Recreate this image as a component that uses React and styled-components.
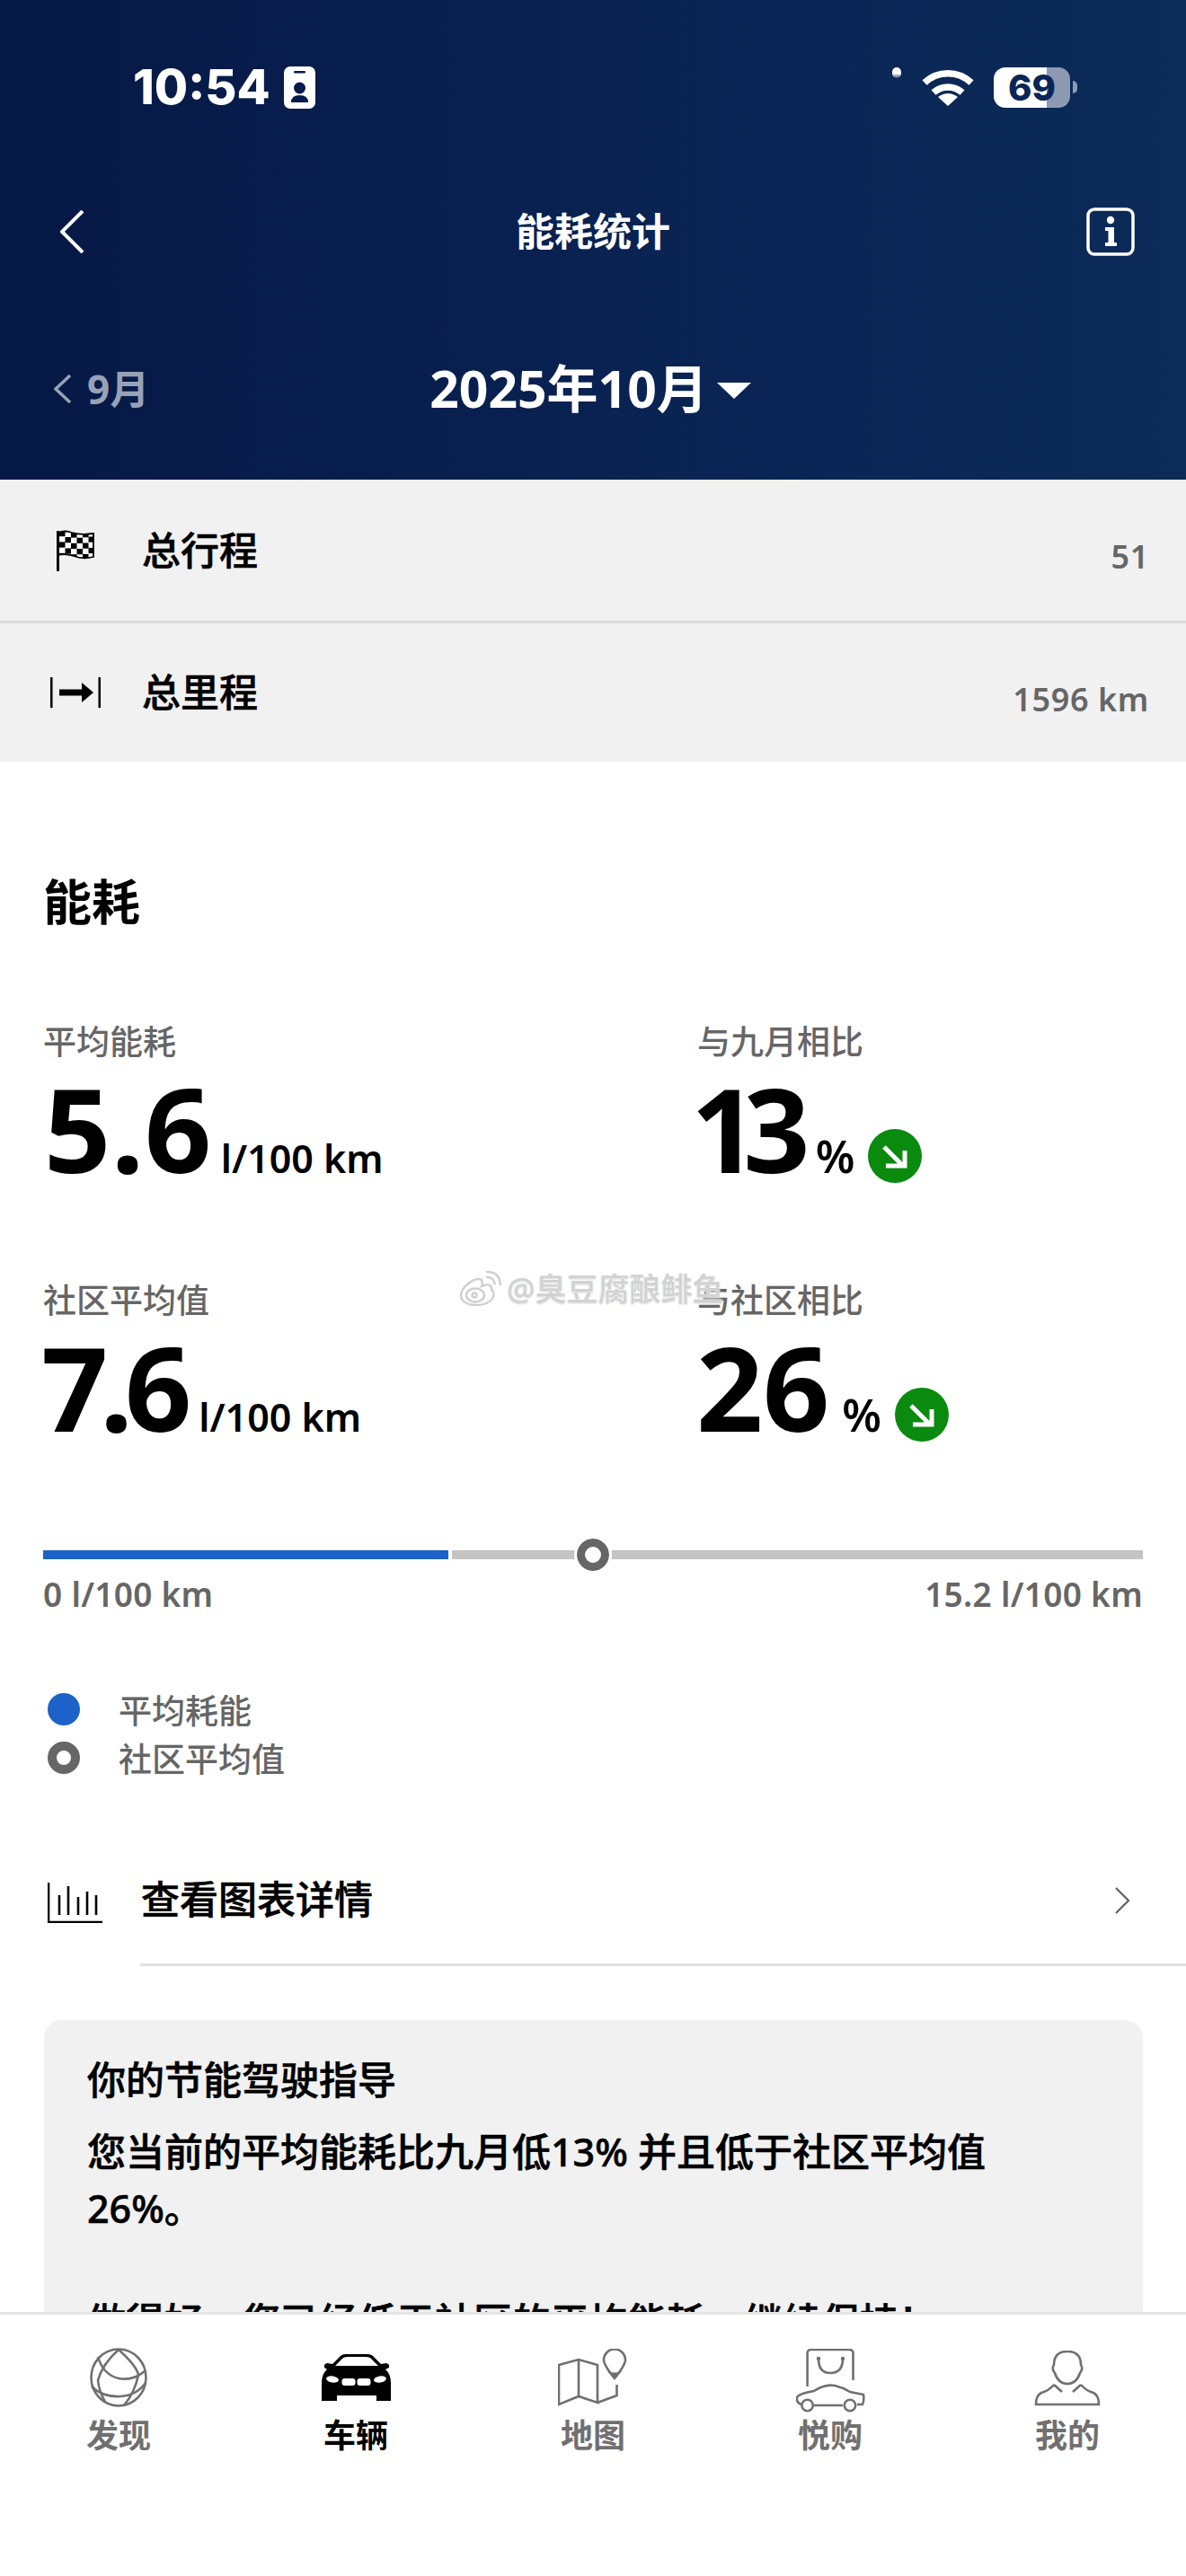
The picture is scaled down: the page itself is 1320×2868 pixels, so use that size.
import React from "react";
import styled, { createGlobalStyle } from "styled-components";

const Global = createGlobalStyle`
  html, body { margin: 0; padding: 0; background: #fff; }
  * { box-sizing: border-box; }
`;

const FONT = `"Noto Sans", "Noto Sans CJK SC", sans-serif`;

const Page = styled.div`
  position: relative;
  width: 1320px;
  height: 2868px;
  overflow: hidden;
  display: flex;
  flex-direction: column;
  background: #fff;
  color: #000;
  font-family: ${FONT};
`;

const Header = styled.header`
  flex: none;
  height: 534px;
  display: flex;
  flex-direction: column;
  background: linear-gradient(90deg, #061845 0%, #0a2656 70%, #0c2b58 100%);
  color: #fff;
`;

const StatusBar = styled.div`
  height: 194px;
  padding: 0 121px 0 148px;
  display: flex;
  align-items: center;
  justify-content: space-between;
`;

const StatusLeft = styled.div`
  display: flex;
  align-items: center;
  gap: 15px;
`;

const Clock = styled.span`
  font-family: Inter, sans-serif;
  font-size: 54px;
  line-height: 60px;
  font-weight: 800;
`;

const StatusRight = styled.div`
  display: flex;
  align-items: center;
`;

const SignalDot = styled.i`
  width: 10px;
  height: 12px;
  border-radius: 5px;
  background: linear-gradient(#fff 55%, rgba(255, 255, 255, 0.2));
  margin: -32px 23px 0 0;
`;

const Battery = styled.div`
  width: 85px;
  height: 45px;
  margin-left: 22px;
  border-radius: 13px;
  background: linear-gradient(90deg, #fff 59px, #8d9ab2 59px);
  color: #0a2656;
  font-family: Inter, sans-serif;
  font-size: 40px;
  font-weight: 800;
  line-height: 45px;
  text-align: center;
`;

const BatteryCap = styled.i`
  width: 5px;
  height: 14px;
  margin-left: 3px;
  border-radius: 0 7px 7px 0;
  background: #8d9ab2;
`;

const TitleBar = styled.div`
  height: 128px;
  padding: 0 57px;
  display: grid;
  grid-template-columns: 1fr auto 1fr;
  align-items: center;
`;

const BackWrap = styled.div`
  display: flex;
  padding-left: 10px;
`;

const Title = styled.h1`
  margin: 0;
  font-size: 43px;
  font-weight: 700;
  line-height: 60px;
`;

const InfoWrap = styled.div`
  justify-self: end;
  display: flex;
`;

const MonthBar = styled.div`
  position: relative;
  height: 212px;
  padding-top: 60px;
  display: flex;
  justify-content: center;
  align-items: flex-start;
`;

const PrevMonth = styled.div`
  position: absolute;
  left: 60px;
  top: 88px;
  display: flex;
  align-items: center;
  gap: 17px;
  color: #98a2b6;
  font-size: 44px;
  font-weight: 700;
  line-height: 46px;
`;

const MonthTitle = styled.div`
  display: flex;
  align-items: center;
  gap: 10px;
  font-size: 57px;
  font-weight: 700;
  line-height: 100px;
  transform: translateX(-3px);
`;

const Caret = styled.i`
  width: 0;
  height: 0;
  margin-top: 6px;
  border-left: 19px solid transparent;
  border-right: 19px solid transparent;
  border-top: 18px solid #fff;
`;

const Body = styled.main`
  flex: 1;
  min-height: 0;
  overflow: hidden;
`;

const SummaryRow = styled.div`
  height: ${(p) => p.$h}px;
  padding: 0 41px 0 ${(p) => p.$pad}px;
  display: flex;
  align-items: center;
  background: #f1f1f2;
  border-bottom: ${(p) => (p.$line ? "3px solid #dcdcdc" : "0")};
`;

const SummaryIcon = styled.div`
  width: ${(p) => p.$w}px;
  display: flex;
`;

const SummaryLabel = styled.span`
  flex: 1;
  font-size: 43px;
  font-weight: 500;
  -webkit-text-stroke: 0.6px #000;
  line-height: 60px;
`;

const SummaryValue = styled.span`
  color: #666;
  font-size: 36px;
  font-weight: 600;
  letter-spacing: 0.6px;
  margin-top: 14px;
`;

const Section = styled.section`
  padding: 0 48px;
`;

const SectionTitle = styled.h2`
  margin: 0;
  padding-top: 116px;
  font-size: 54px;
  font-weight: 700;
  line-height: 80px;
`;

const StatGrid = styled.div`
  margin-top: 91px;
  display: grid;
  grid-template-columns: 728px 1fr;
  grid-auto-rows: 288px;
`;

const Stat = styled.div`
  display: flex;
  flex-direction: column;
`;

const StatLabel = styled.div`
  height: 50px;
  color: #666;
  font-size: 37px;
  font-weight: 500;
  line-height: 50px;
`;

const StatValue = styled.div`
  margin-top: 11px;
  display: flex;
  align-items: baseline;
`;

const BigNumber = styled.span`
  font-size: 130px;
  font-weight: 700;
  line-height: 120px;
  letter-spacing: ${(p) => p.$track}px;
  margin-left: ${(p) => p.$shift}px;
`;

const Unit = styled.span`
  margin-left: ${(p) => p.$gap}px;
  font-size: ${(p) => p.$size}px;
  font-weight: 600;
  line-height: 60px;
`;

const Trend = styled.svg`
  width: 60px;
  height: 60px;
  align-self: flex-end;
  margin: 0 0 0 15px;
`;

const Range = styled.div`
  margin-top: 2px;
`;

const Track = styled.div`
  height: 36px;
  display: flex;
  align-items: center;
  gap: 4px;
  position: relative;
`;

const TrackFill = styled.i`
  height: 10px;
  background: ${(p) => p.$c};
  flex: ${(p) => p.$flex};
`;

const Marker = styled.i`
  position: absolute;
  left: 594px;
  top: 0;
  width: 36px;
  height: 36px;
  border-radius: 50%;
  background: #fff;
  border: 9px solid #666;
  outline: 3px solid #fff;
`;

const RangeLabels = styled.div`
  margin-top: 1px;
  display: flex;
  justify-content: space-between;
  color: #666;
  font-size: 37px;
  font-weight: 600;
  line-height: 50px;
  letter-spacing: 0.3px;
`;

const Legend = styled.div`
  margin-top: 76px;
  display: flex;
  flex-direction: column;
`;

const LegendRow = styled.div`
  height: 54px;
  display: flex;
  align-items: center;
  gap: 43px;
  padding-left: 5px;
  color: #666;
  font-size: 37px;
  font-weight: 500;
`;

const LegendDot = styled.i`
  width: 36px;
  height: 36px;
  border-radius: 50%;
  background: ${(p) => (p.$ring ? "#fff" : "#1c62c8")};
  border: ${(p) => (p.$ring ? "10px solid #666" : "0")};
`;

const DetailRow = styled.div`
  margin-top: 82px;
  height: 120px;
  display: flex;
  align-items: flex-start;
  padding: 24px 62px 0 53px;
`;

const DetailIcon = styled.div`
  width: 104px;
  display: flex;
  padding-top: 6px;
`;

const DetailLabel = styled.span`
  flex: 1;
  font-size: 43px;
  font-weight: 500;
  -webkit-text-stroke: 0.6px #000;
  line-height: 50px;
`;

const DetailChevron = styled.div`
  display: flex;
  padding-top: 11px;
`;

const Divider = styled.div`
  margin-left: 156px;
  height: 3px;
  background: #e0e0e0;
`;

const Card = styled.div`
  margin: 60px 48px 0 49px;
  padding: 35px 48px 60px;
  border-radius: 20px;
  background: #f1f1f2;
  font-size: 43px;
  font-weight: 500;
  -webkit-text-stroke: 0.6px #000;
  line-height: 63px;
`;

const CardTitle = styled.div`
  margin-bottom: 17px;
`;

const CardText = styled.div`
  margin-bottom: 63px;
`;

const TabBar = styled.nav`
  flex: none;
  height: 294px;
  display: grid;
  grid-template-columns: repeat(5, 264px);
  background: #fff;
  border-top: 3px solid #e4e4e4;
`;

const Tab = styled.div`
  display: flex;
  flex-direction: column;
  align-items: center;
  color: ${(p) => (p.$active ? "#000" : "#707070")};
`;

const TabIcon = styled.div`
  height: 71px;
  margin-top: 34px;
  padding-top: ${(p) => p.$nudge}px;
  display: flex;
  align-items: center;
`;

const TabLabel = styled.span`
  margin-top: 5px;
  font-size: 36px;
  font-weight: 700;
  line-height: 50px;
`;

const Watermark = styled.div`
  position: absolute;
  left: 511px;
  top: 1411px;
  display: flex;
  align-items: center;
  gap: 5px;
  color: #d2d2d2;
  font-size: 35px;
  font-weight: 500;
  line-height: 48px;
  text-shadow: 0 0 3px #fff, 0 1px 2px #bbb;
`;

const Chevron = ({ w, h, color = "#fff", sw = 4, dir = "left" }) => (
  <svg width={w} height={h} viewBox={`0 0 ${w} ${h}`} fill="none">
    <path
      d={dir === "left" ? `M${w - 2} 1 L2 ${h / 2} L${w - 2} ${h - 1}` : `M2 1 L${w - 2} ${h / 2} L2 ${h - 1}`}
      stroke={color}
      strokeWidth={sw}
    />
  </svg>
);

const BadgeIcon = () => (
  <svg width="35" height="47" viewBox="0 0 35 47">
    <rect width="35" height="47" rx="7" fill="#fff" />
    <rect x="11" y="5" width="13" height="2.6" rx="1.3" fill="#061a4c" />
    <circle cx="17.5" cy="24" r="6.5" fill="#061a4c" />
    <path d="M8 40 q0 -8 9.5 -8 q9.5 0 9.5 8 z" fill="#061a4c" />
  </svg>
);

const WifiIcon = () => (
  <svg width="58" height="42" viewBox="0 0 58 42" fill="none" stroke="#fff" strokeWidth="7.5">
    <path d="M3 16 A38 38 0 0 1 55 16" />
    <path d="M13 27 A24 24 0 0 1 45 27" />
    <path d="M29 42 L18 32 Q29 24 40 32 Z" fill="#fff" stroke="none" />
  </svg>
);

const InfoIcon = () => (
  <svg width="54" height="54" viewBox="0 0 54 54">
    <rect x="2" y="2" width="50" height="50" rx="7" fill="none" stroke="#fff" strokeWidth="3.5" />
    <circle cx="27" cy="14" r="4.2" fill="#fff" />
    <path d="M21 22 H31 V39 H34 V43 H21 V39 H24.5 V26 H21 Z" fill="#fff" />
  </svg>
);

const FLAG_OUTLINE = "M3 3 Q10 0 18 3 Q28 6 42 4 V30 Q30 33 20 29 Q10 26 3 28 Z";

const FlagIcon = () => {
  const cells = [];
  for (let r = 0; r < 5; r++) {
    for (let c = 0; c < 6; c++) {
      if ((r + c) % 2 === 0) cells.push(<rect key={`${r}-${c}`} x={4 + c * 6.5} y={1 + r * 6.2 + Math.sin(c / 1.7) * 1.5} width="6.5" height="6.2" />);
    }
  }
  return (
    <svg width="43" height="46" viewBox="0 0 43 46">
      <defs>
        <clipPath id="flag-wave">
          <path d={FLAG_OUTLINE} />
        </clipPath>
      </defs>
      <path d={FLAG_OUTLINE} fill="#fff" stroke="#000" strokeWidth="1.8" />
      <g clipPath="url(#flag-wave)" fill="#000">{cells}</g>
      <rect x="1" y="1" width="3" height="45" fill="#000" />
    </svg>
  );
};

const SpanIcon = () => (
  <svg width="56" height="34" viewBox="0 0 56 34">
    <rect x="0" y="0" width="2.5" height="34" fill="#000" />
    <rect x="53.5" y="0" width="2.5" height="34" fill="#000" />
    <path d="M10 13.5 H35 V6 L48 17 L35 28 V20.5 H10 Z" fill="#000" />
  </svg>
);

const ChartIcon = () => (
  <svg width="61" height="45" viewBox="0 0 61 45" fill="none" stroke="#000">
    <path d="M1 0 V44 H61" strokeWidth="2.6" />
    <path d="M13 14 V36 M23 4 V36 M34 16 V36 M44 10 V36 M54 14 V36" strokeWidth="2.6" />
  </svg>
);

const TrendIcon = () => (
  <Trend viewBox="0 0 60 60">
    <circle cx="30" cy="30" r="30" fill="#0a8a0f" />
    <path d="M18 20 L38 40 M20 41 H41 V24" stroke="#fff" strokeWidth="5" fill="none" />
  </Trend>
);

const GlobeIcon = () => (
  <svg width="64" height="66" viewBox="0 0 64 66" fill="none" stroke="#707070" strokeWidth="2.6">
    <ellipse cx="32" cy="33" rx="30.5" ry="31.5" />
    <path d="M9 10 Q15 30 32 34 Q48 37 61 26" />
    <path d="M2 43 Q14 55 34 54 Q52 53 62 39" />
    <path d="M32 2 Q52 20 54 30 Q50 50 38 64" />
    <path d="M32 2 Q14 18 9 36 Q10 48 17 60" />
  </svg>
);

const CarFrontIcon = () => (
  <svg width="77" height="52" viewBox="0 0 77 52">
    <path
      fillRule="evenodd"
      d="M27 0 H51 Q56 0 59 4 L66 11 L72 10 Q76 11 75 15 L71 17 Q77 22 77 32 V52 H61 V46 H17 V52 H0 V32 Q0 22 6 17 L3 15 Q2 11 6 10 L12 11 L19 4 Q22 0 27 0 Z M29 3 Q24 3 22 6 L15 13 H63 L56 6 Q54 3 49 3 Z"
      fill="#000"
    />
    <ellipse cx="12" cy="28" rx="7" ry="3.6" fill="#fff" transform="rotate(10 12 28)" />
    <ellipse cx="65" cy="28" rx="7" ry="3.6" fill="#fff" transform="rotate(-10 65 28)" />
    <rect x="22.5" y="27" width="15" height="8" rx="3" fill="#fff" />
    <rect x="39.5" y="27" width="15" height="8" rx="3" fill="#fff" />
  </svg>
);

const MapIcon = () => (
  <svg width="78" height="64" viewBox="0 0 78 64" fill="none" stroke="#707070" strokeWidth="2.6">
    <path d="M1 18 L23 12 L44 18 V60 L23 53 L1 62 Z" />
    <path d="M23 12 V53" />
    <path d="M44 60 L65.5 52 V40" />
    <path d="M63 33 Q51 18 51 12.5 A12 12 0 0 1 75 12.5 Q75 18 63 33 Z" />
    <path d="M55 25 Q63 28 71 25 L63 34 Z" fill="#707070" stroke="none" />
  </svg>
);

const BagCarIcon = () => (
  <svg width="77" height="71" viewBox="0 0 77 71" fill="none" stroke="#707070" strokeWidth="2.6">
    <path d="M12.6 42 V5 Q12.6 1 17 1 H59 Q63.5 1 63.5 5 V35" />
    <path d="M25 11 Q25 27 38 27 Q52 27 52 11" />
    <circle cx="25" cy="11" r="2.2" fill="#707070" stroke="none" />
    <circle cx="52" cy="11" r="2.2" fill="#707070" stroke="none" />
    <path d="M6 62 Q0 60 1 54 Q3 50 20 47 Q32 39 43 41 Q52 43 60 48 L75 51 Q76 58 74 62 H68 M52 63 H20" />
    <circle cx="12.6" cy="63" r="6.2" />
    <circle cx="60" cy="63" r="6.2" />
  </svg>
);

const PersonIcon = () => (
  <svg width="74" height="62" viewBox="0 0 74 62" fill="none" stroke="#707070" strokeWidth="2.6">
    <path d="M22 16 Q22 1 37 1 Q52 1 52 16 Q55 20 51 25 Q47 37 37 37 Q27 37 23 25 Q19 20 22 16 Z" />
    <path d="M22 38 Q16 45 8 47 Q2 50 2 60 H72 Q72 50 66 47 Q58 45 52 38" />
    <path d="M22 38 L31 46 M52 38 L43 46" />
  </svg>
);

const WeiboIcon = () => (
  <svg width="48" height="40" viewBox="0 0 48 40" fill="none" stroke="#cfcfcf" strokeWidth="2.4">
    <path d="M19 38 C8 38 2 33 2 27 C2 19 14 9 22 9 C27 9 26 14 25 17 C31 14 37 15 36 21 C41 23 40 38 19 38 Z" />
    <ellipse cx="18" cy="27" rx="10" ry="7.5" />
    <circle cx="17" cy="27" r="2.5" />
    <path d="M30 7 Q38 6 40 15 M30 1 Q45 0 46 16" />
  </svg>
);

const tabs = [
  { label: "发现", icon: <GlobeIcon />, nudge: 0 },
  { label: "车辆", icon: <CarFrontIcon />, active: true, nudge: 0 },
  { label: "地图", icon: <MapIcon />, nudge: 0 },
  { label: "悦购", icon: <BagCarIcon />, nudge: 8 },
  { label: "我的", icon: <PersonIcon />, nudge: 2 },
];

const stats = [
  { label: "平均能耗", value: "5.6", unit: "l/100 km", shift: 1, track: 0.5, gap: 10, size: 43 },
  { label: "与九月相比", value: "13", unit: "%", trend: true, shift: -7, track: -16, gap: 22, size: 50 },
  { label: "社区平均值", value: "7.6", unit: "l/100 km", shift: -2, track: -9, gap: 17, size: 43 },
  { label: "与社区相比", value: "26", unit: "%", trend: true, shift: -1, track: -0.3, gap: 14, size: 50 },
];

export default function App() {
  return (
    <Page>
      <Global />
      <Header>
        <StatusBar>
          <StatusLeft>
            <Clock>10:54</Clock>
            <BadgeIcon />
          </StatusLeft>
          <StatusRight>
            <SignalDot />
            <WifiIcon />
            <Battery>69</Battery>
            <BatteryCap />
          </StatusRight>
        </StatusBar>
        <TitleBar>
          <BackWrap>
            <Chevron w={27} h={48} />
          </BackWrap>
          <Title>能耗统计</Title>
          <InfoWrap>
            <InfoIcon />
          </InfoWrap>
        </TitleBar>
        <MonthBar>
          <PrevMonth>
            <Chevron w={20} h={32} color="#98a2b6" sw={3.5} />
            9月
          </PrevMonth>
          <MonthTitle>
            2025年10月
            <Caret />
          </MonthTitle>
        </MonthBar>
      </Header>
      <Body>
        <SummaryRow $h={160} $pad={62} $line>
          <SummaryIcon $w={96}>
            <FlagIcon />
          </SummaryIcon>
          <SummaryLabel>总行程</SummaryLabel>
          <SummaryValue>51</SummaryValue>
        </SummaryRow>
        <SummaryRow $h={154} $pad={56}>
          <SummaryIcon $w={102}>
            <SpanIcon />
          </SummaryIcon>
          <SummaryLabel>总里程</SummaryLabel>
          <SummaryValue>1596 km</SummaryValue>
        </SummaryRow>
        <Section>
          <SectionTitle>能耗</SectionTitle>
          <StatGrid>
            {stats.map((s) => (
              <Stat key={s.label}>
                <StatLabel>{s.label}</StatLabel>
                <StatValue>
                  <BigNumber $shift={s.shift} $track={s.track}>{s.value}</BigNumber>
                  <Unit $gap={s.gap} $size={s.size}>{s.unit}</Unit>
                  {s.trend && <TrendIcon />}
                </StatValue>
              </Stat>
            ))}
          </StatGrid>
          <Range>
            <Track>
              <TrackFill $c="#1c62c8" $flex="0 0 451px" />
              <TrackFill $c="#c4c4c4" $flex="1" />
              <Marker />
            </Track>
            <RangeLabels>
              <span>0 l/100 km</span>
              <span>15.2 l/100 km</span>
            </RangeLabels>
          </Range>
          <Legend>
            <LegendRow>
              <LegendDot />
              平均耗能
            </LegendRow>
            <LegendRow>
              <LegendDot $ring />
              社区平均值
            </LegendRow>
          </Legend>
        </Section>
        <DetailRow>
          <DetailIcon>
            <ChartIcon />
          </DetailIcon>
          <DetailLabel>查看图表详情</DetailLabel>
          <DetailChevron>
            <Chevron w={18} h={30} color="#666" sw={2.4} dir="right" />
          </DetailChevron>
        </DetailRow>
        <Divider />
        <Card>
          <CardTitle>你的节能驾驶指导</CardTitle>
          <CardText>
            您当前的平均能耗比九月低13% 并且低于社区平均值
            <br />
            26%。
          </CardText>
          <div>做得好，您已经低于社区的平均能耗，继续保持！</div>
        </Card>
      </Body>
      <TabBar>
        {tabs.map((t) => (
          <Tab key={t.label} $active={t.active}>
            <TabIcon $nudge={t.nudge}>{t.icon}</TabIcon>
            <TabLabel>{t.label}</TabLabel>
          </Tab>
        ))}
      </TabBar>
      <Watermark>
        <WeiboIcon />
        @臭豆腐酿鲱鱼
      </Watermark>
    </Page>
  );
}
